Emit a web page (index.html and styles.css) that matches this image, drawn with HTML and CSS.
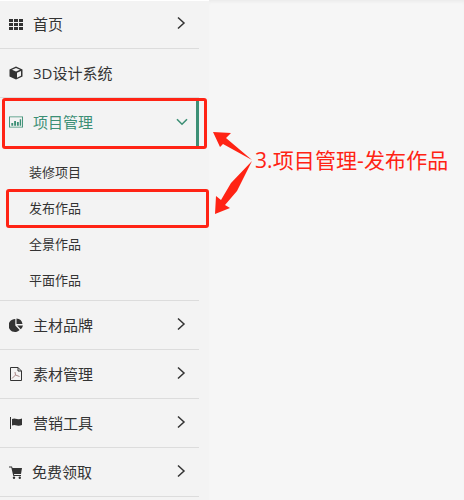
FILE: index.html
```html
<!DOCTYPE html>
<html lang="zh">
<head>
<meta charset="utf-8">
<title>项目管理</title>
<link rel="stylesheet" href="styles.css">
</head>
<body>
<div class="app">
  <nav class="sidebar">
    <a class="item">
      <svg class="icon" viewBox="0 0 14 14"><path fill="#333" d="M0 2h4v3H0zM5 2h4v3H5zM10 2h4v3h-4zM0 6h4v3H0zM5 6h4v3H5zM10 6h4v3h-4zM0 10h4v3H0zM5 10h4v3H5zM10 10h4v3h-4z"/></svg>
      <span class="label">首页</span>
      <svg class="chev" viewBox="0 0 10 14"><path d="M2 1.500 8 7l-6 5.500" fill="none" stroke="#333" stroke-width="1.500"/></svg>
    </a>
    <a class="item">
      <svg class="icon" viewBox="0 0 14 14"><path fill="#333" d="M7 .5 13.500 3.500v7L7 13.500.5 10.500v-7zM7 2 3 3.800 7 5.500l4-1.700zM8 6.800v4.900l4-1.900V5z"/></svg>
      <span class="label">3D设计系统</span>
    </a>
    <a class="item active">
      <svg class="icon" viewBox="0 0 15 14"><path fill="#3c8f75" d="M0 1h15v12H0zM1 2v10h13V2z"/><path fill="#3c8f75" d="M2.500 8h2v3h-2zM5.500 6h2v5h-2zM8.500 7h2v4h-2zM11.500 4h1.500v7h-1.500z"/></svg>
      <span class="label">项目管理</span>
      <svg class="chev down" viewBox="0 0 12 8"><path d="M1 1.200 6 6.200l5-5" fill="none" stroke="#3c8f75" stroke-width="1.600"/></svg>
    </a>
    <div class="sub">
      <a class="subitem">装修项目</a>
      <a class="subitem">发布作品</a>
      <a class="subitem">全景作品</a>
      <a class="subitem">平面作品</a>
    </div>
    <a class="item">
      <svg class="icon" viewBox="0 0 14 14"><path fill="#333" d="M6.300 1v6.500l4.300 4.600A6.500 6.500 0 1 1 6.300 1zM7.500.5A6.500 6.500 0 0 1 13.500 6H7.500zM8.200 7.500H14a6.500 6.500 0 0 1-2.300 3.700z"/></svg>
      <span class="label">主材品牌</span>
      <svg class="chev" viewBox="0 0 10 14"><path d="M2 1.500 8 7l-6 5.500" fill="none" stroke="#333" stroke-width="1.500"/></svg>
    </a>
    <a class="item">
      <svg class="icon" viewBox="0 0 14 14"><path fill="none" stroke="#333" d="M1.500.5h7.500l3.500 3.500v9.500h-11z"/><path fill="none" stroke="#333" d="M9 .5V4h3.500"/><path fill="none" stroke="#a88" d="M3 11.500 6.500 8l-.5-3M6.500 8l4 1.500"/></svg>
      <span class="label">素材管理</span>
      <svg class="chev" viewBox="0 0 10 14"><path d="M2 1.500 8 7l-6 5.500" fill="none" stroke="#333" stroke-width="1.500"/></svg>
    </a>
    <a class="item">
      <svg class="icon" viewBox="0 0 14 14"><path fill="#333" d="M1 1h1v12H1zM3 3c2-1 3-.5 5 0s3 .3 5-.5v6.500c-2 .8-3 1-5 .5s-3-1-5 0z"/></svg>
      <span class="label">营销工具</span>
      <svg class="chev" viewBox="0 0 10 14"><path d="M2 1.500 8 7l-6 5.500" fill="none" stroke="#333" stroke-width="1.500"/></svg>
    </a>
    <a class="item">
      <svg class="icon" viewBox="0 0 14 14"><path fill="#333" d="M0 1.500h3l.5 1.500H13l-1 6H5l.2 1H12v1H4.300L2.300 2.500H0z"/><circle fill="#333" cx="5" cy="12.800" r="1.200"/><circle fill="#333" cx="10.800" cy="12.800" r="1.200"/></svg>
      <span class="label shift">免费领取</span>
      <svg class="chev" viewBox="0 0 10 14"><path d="M2 1.500 8 7l-6 5.500" fill="none" stroke="#333" stroke-width="1.500"/></svg>
    </a>
  </nav>
  <main class="content"></main>
  <div class="mark box-one"></div>
  <div class="mark box-two"></div>
  <svg class="arrows" viewBox="0 0 50 100" aria-hidden="true">
    <path fill="#ff2314" d="M0 1 18 2 13 7 39 29 10 13 7 16z"/>
    <path fill="#ff2314" d="M39 30 24 60 12 74 17 77 2 83 3 65 8 69 18 52z"/>
  </svg>
  <div class="note">3.项目管理-发布作品</div>
</div>
</body>
</html>
```
FILE: styles.css
```css
* { box-sizing: border-box; }
html, body { margin: 0; height: 100%; }
body { font-family: "Open Sans", "Noto Sans CJK SC", sans-serif; overflow: hidden; background: #f6f6f6; }
.app { position: relative; display: flex; width: 464px; height: 500px; overflow: hidden; }
.sidebar { width: 209px; flex: none; padding-right: 10px; background: #f3f3f3; box-shadow: inset 0 1px 0 #fff; }
.content { flex: 1; background: #f6f6f6; box-shadow: inset 0 3px 3px -1px #ececec; }
.item { display: flex; align-items: center; height: 49px; padding: 0 13px 0 9px; border-bottom: 1px solid #dcdcdc; color: #333; font-size: 15px; }
.icon { width: 14px; height: 14px; flex: none; }
.label { margin-left: 10px; flex: 1; white-space: nowrap; line-height: 20px; }
.label.shift { margin-left: 9px; }
.chev { width: 10px; height: 14px; flex: none; margin-bottom: 2px; }
.chev.down { width: 12px; height: 8px; margin: 0 -2px 0 0; }
.active { color: #3c8f75; border-bottom: 0; height: 48px; border-right: 3px solid #3c8f75; padding-right: 10px; }
.sub { padding: 8px 0 0; border-bottom: 1px solid #dcdcdc; height: 155px; }
.subitem { display: block; height: 36px; line-height: 36px; padding-left: 29px; font-size: 13px; color: #333; }
.mark { position: absolute; border: 3px solid #ff2314; border-radius: 3px; }
.box-one { left: 2px; top: 98px; width: 205px; height: 51px; }
.box-two { left: 6px; top: 189px; width: 203px; height: 39px; }
.arrows { position: absolute; left: 213px; top: 131px; width: 50px; height: 100px; }
.note { position: absolute; left: 255px; top: 146px; font-size: 21px; line-height: 28px; letter-spacing: .1px; color: #ff2314; white-space: nowrap; }
```
